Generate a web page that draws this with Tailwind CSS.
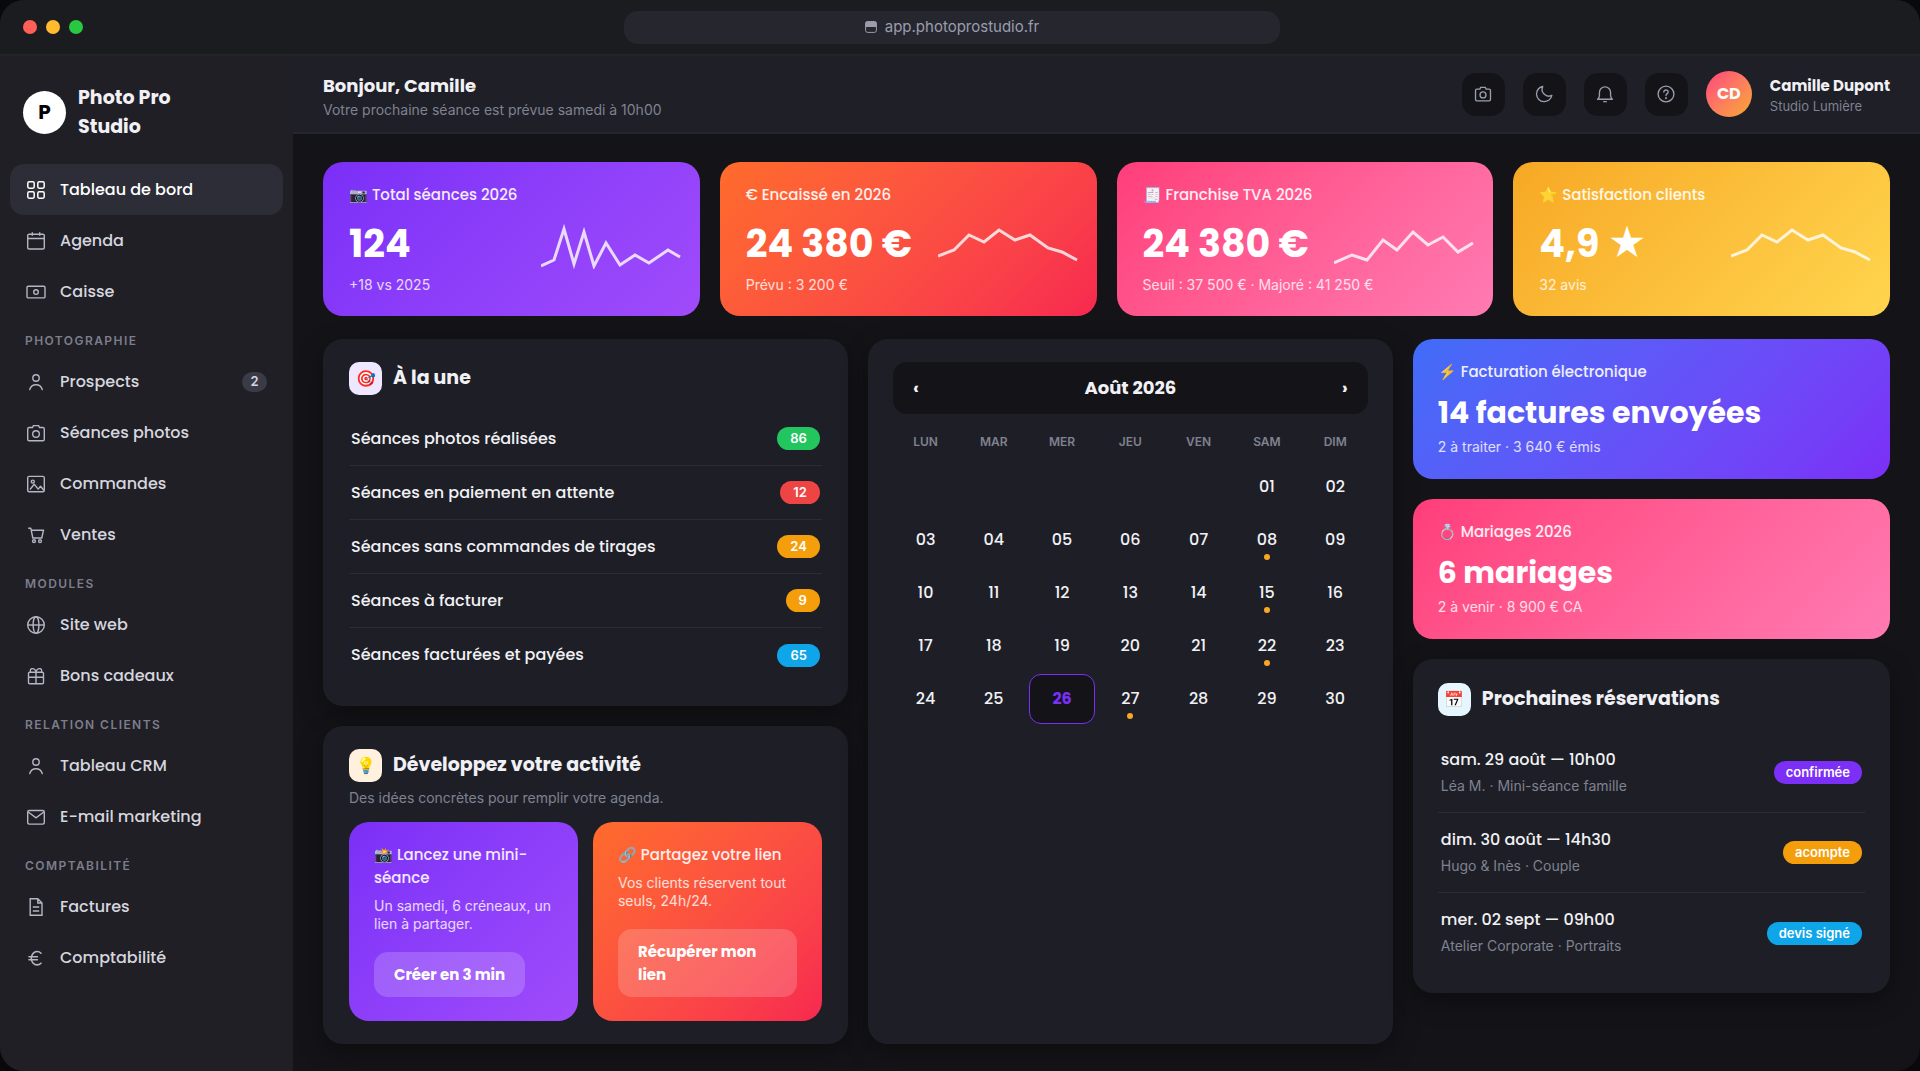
<!DOCTYPE html>
<html lang="fr">
<head>
  <meta charset="UTF-8" />
  <meta name="viewport" content="width=device-width, initial-scale=1.0" />
  <title>Photo Pro Studio - Tableau de bord</title>
  <script src="https://cdn.jsdelivr.net/npm/@tailwindcss/browser@4"></script>
</head>
<body class="bg-[#09090c] font-['Inter',sans-serif] text-[#f1f1f5]">
  <div class="min-h-screen flex flex-col rounded-3xl overflow-hidden bg-[#141418]">

    <!-- Window bar -->
    <div class="h-14 pl-[23px] pr-[39px] grid grid-cols-[1fr_656px_1fr] items-center bg-[#1b1c20] border-b-2 border-[#232428]">
      <div class="flex gap-[9px]">
        <span class="size-3.5 rounded-full bg-[#ff5f57]"></span>
        <span class="size-3.5 rounded-full bg-[#febc2e]"></span>
        <span class="size-3.5 rounded-full bg-[#28c840]"></span>
      </div>
      <div class="h-[33px] rounded-[14px] bg-[#26272e] flex items-center justify-center gap-2 text-[15px] text-[#9a9dae]">
        <svg class="size-3" viewBox="0 0 12 12" fill="none" stroke="currentColor"><rect x="0.6" y="0.6" width="10.8" height="10.8" rx="2"/><path d="M1 1h10v4.5H1z" fill="currentColor"/></svg>
        <span>app.photoprostudio.fr</span>
      </div>
    </div>

    <div class="flex-1 flex">
      <!-- Sidebar -->
      <aside class="w-[293px] shrink-0 bg-[#201f25] px-2.5 pt-6">
        <div class="flex items-center gap-3 px-[13px] pt-[3px] mb-[23px] font-['Poppins','Inter',sans-serif] font-bold">
          <span class="size-[43px] rounded-full bg-white text-black text-xl flex items-center justify-center">P</span>
          <span class="w-28 text-[19px] leading-[29px]">Photo Pro Studio</span>
        </div>

        <nav class="font-['Poppins','Inter',sans-serif] font-medium text-base text-[#d5d6df]">
          <a href="#" class="h-[51px] px-4 flex items-center gap-3.5 rounded-[14px] bg-[#2c2d36] text-white">
            <svg class="size-5" viewBox="0 0 20 20" fill="none" stroke="currentColor" stroke-width="1.5"><rect x="1.8" y="1.8" width="6.4" height="6.4" rx="1.4"/><rect x="11.8" y="1.8" width="6.4" height="6.4" rx="1.4"/><rect x="1.8" y="11.8" width="6.4" height="6.4" rx="1.4"/><rect x="11.8" y="11.8" width="6.4" height="6.4" rx="1.4"/></svg>
            Tableau de bord
          </a>
          <a href="#" class="h-[51px] px-4 flex items-center gap-3.5">
            <svg class="size-5 text-[#b4b6c4]" viewBox="0 0 20 20" fill="none" stroke="currentColor" stroke-width="1.4"><rect x="1.7" y="3.2" width="16.6" height="14.8" rx="1.5"/><path d="M1.7 7.5h16.6M6.3 1.2v3.6M13.7 1.2v3.6"/></svg>
            Agenda
          </a>
          <a href="#" class="h-[51px] px-4 flex items-center gap-3.5">
            <svg class="size-5 text-[#b4b6c4]" viewBox="0 0 20 20" fill="none" stroke="currentColor" stroke-width="1.4"><rect x="1" y="4.3" width="18" height="11.6" rx="1.2"/><circle cx="10" cy="10.1" r="2.3"/></svg>
            Caisse
          </a>

          <p class="h-[39px] px-[15px] pt-4 text-xs font-semibold tracking-[0.12em] text-[#7c7e8c] font-['Inter',sans-serif]">PHOTOGRAPHIE</p>
          <a href="#" class="h-[51px] px-4 flex items-center gap-3.5">
            <svg class="size-5 text-[#b4b6c4]" viewBox="0 0 20 20" fill="none" stroke="currentColor" stroke-width="1.4" stroke-linecap="round"><circle cx="10" cy="6" r="3.2"/><path d="M3.7 17.6c1-3.3 3.4-4.9 6.3-4.9s5.3 1.6 6.3 4.9"/></svg>
            <span class="flex-1">Prospects</span>
            <span class="h-5 min-w-[25px] rounded-full bg-[#3a3b47] text-[13px] font-semibold font-['Inter',sans-serif] flex items-center justify-center">2</span>
          </a>
          <a href="#" class="h-[51px] px-4 flex items-center gap-3.5">
            <svg class="size-5 text-[#b4b6c4]" viewBox="0 0 20 20" fill="none" stroke="currentColor" stroke-width="1.4"><path d="M3.2 4.5h3.3l.9-1.9h5.2l.9 1.9h3.3q1.5 0 1.5 1.5v10.2q0 1.5-1.5 1.5H3.2q-1.5 0-1.5-1.5V6q0-1.5 1.5-1.5z"/><circle cx="10" cy="11" r="3.3"/></svg>
            Séances photos
          </a>
          <a href="#" class="h-[51px] px-4 flex items-center gap-3.5">
            <svg class="size-5 text-[#b4b6c4]" viewBox="0 0 20 20" fill="none" stroke="currentColor" stroke-width="1.4" stroke-linejoin="round"><rect x="1.7" y="2.4" width="16.6" height="15.4" rx="1.5"/><circle cx="6.8" cy="7.6" r="1.5"/><path d="M4 15.5l4.2-5.2 4 4.8 2.3-2.8 3.3 4"/></svg>
            Commandes
          </a>
          <a href="#" class="h-[51px] px-4 flex items-center gap-3.5">
            <svg class="size-5 text-[#b4b6c4]" viewBox="0 0 20 20" fill="none" stroke="currentColor" stroke-width="1.4" stroke-linejoin="round"><path d="M2.2 3.2h2.6l2 9.8h9l1.7-7.8H5.2"/><circle cx="8" cy="16.2" r="1.4"/><circle cx="14" cy="16.2" r="1.4"/></svg>
            Ventes
          </a>

          <p class="h-[39px] px-[15px] pt-4 text-xs font-semibold tracking-[0.12em] text-[#7c7e8c] font-['Inter',sans-serif]">MODULES</p>
          <a href="#" class="h-[51px] px-4 flex items-center gap-3.5">
            <svg class="size-5 text-[#b4b6c4]" viewBox="0 0 20 20" fill="none" stroke="currentColor" stroke-width="1.4"><circle cx="10" cy="10" r="8.3"/><ellipse cx="10" cy="10" rx="2.9" ry="8.3"/><path d="M1.7 10h16.6"/></svg>
            Site web
          </a>
          <a href="#" class="h-[51px] px-4 flex items-center gap-3.5">
            <svg class="size-5 text-[#b4b6c4]" viewBox="0 0 20 20" fill="none" stroke="currentColor" stroke-width="1.4" stroke-linejoin="round"><rect x="2.5" y="6.2" width="15" height="11.6" rx="1.3"/><path d="M2.5 11.3h15M10 6.2v11.6M10 6.2C9.6 3.6 7.8 2.2 5.7 2.7 3.9 3.2 4 5.7 5 6.2M10 6.2c.4-2.6 2.2-4 4.3-3.5 1.8.5 1.7 3 .7 3.5"/></svg>
            Bons cadeaux
          </a>

          <p class="h-[39px] px-[15px] pt-4 text-xs font-semibold tracking-[0.12em] text-[#7c7e8c] font-['Inter',sans-serif]">RELATION CLIENTS</p>
          <a href="#" class="h-[51px] px-4 flex items-center gap-3.5">
            <svg class="size-5 text-[#b4b6c4]" viewBox="0 0 20 20" fill="none" stroke="currentColor" stroke-width="1.4" stroke-linecap="round"><circle cx="10" cy="6" r="3.2"/><path d="M3.7 17.6c1-3.3 3.4-4.9 6.3-4.9s5.3 1.6 6.3 4.9"/></svg>
            Tableau CRM
          </a>
          <a href="#" class="h-[51px] px-4 flex items-center gap-3.5">
            <svg class="size-5 text-[#b4b6c4]" viewBox="0 0 20 20" fill="none" stroke="currentColor" stroke-width="1.4"><rect x="1.7" y="3.5" width="16.6" height="13.6" rx="1.5"/><path d="M2.2 5l7.800 5.800L17.800 5"/></svg>
            E-mail marketing
          </a>

          <p class="h-[39px] px-[15px] pt-4 text-xs font-semibold tracking-[0.12em] text-[#7c7e8c] font-['Inter',sans-serif]">COMPTABILITÉ</p>
          <a href="#" class="h-[51px] px-4 flex items-center gap-3.5">
            <svg class="size-5 text-[#b4b6c4]" viewBox="0 0 20 20" fill="none" stroke="currentColor" stroke-width="1.4"><path d="M4.2 1.8h7.6l4.2 4.2v12.2H4.2zM11.8 1.8V6H16M6.8 10h6.4M6.8 14h6.4"/></svg>
            Factures
          </a>
          <a href="#" class="h-[51px] px-4 flex items-center gap-3.5">
            <svg class="size-5 text-[#b4b6c4]" viewBox="0 0 20 20" fill="none" stroke="currentColor" stroke-width="1.6" stroke-linecap="round"><path d="M15 5.2C13.8 4 12.6 3.5 11.2 3.5 7.8 3.5 5.3 6.5 5.3 10.2s2.5 6.7 5.9 6.7c1.4 0 2.6-.5 3.8-1.7M3 8.8h8.4M3 11.7h8.4"/></svg>
            Comptabilité
          </a>
        </nav>
      </aside>

      <div class="flex-1 min-w-0 flex flex-col">
        <!-- Header -->
        <header class="h-[78px] px-[30px] flex items-center gap-[18px] bg-[#1e1f27] border-b-2 border-[#26272c]">
          <div class="flex-1 pt-2">
            <h1 class="font-['Poppins','Inter',sans-serif] font-bold text-lg leading-6">Bonjour, Camille</h1>
            <p class="text-sm leading-6 text-[#7f8290]">Votre prochaine séance est prévue samedi à 10h00</p>
          </div>
          <button aria-label="Photos" class="size-[43px] rounded-[14px] bg-[#141418] text-[#9a9dae] flex items-center justify-center">
            <svg class="size-[18px]" viewBox="0 0 20 20" fill="none" stroke="currentColor" stroke-width="1.5"><path d="M3.2 4.5h3.3l.9-1.9h5.2l.9 1.9h3.3q1.5 0 1.5 1.5v10.2q0 1.5-1.5 1.5H3.2q-1.5 0-1.5-1.5V6q0-1.5 1.5-1.5z"/><circle cx="10" cy="11" r="3.3"/></svg>
          </button>
          <button aria-label="Mode sombre" class="size-[43px] rounded-[14px] bg-[#141418] text-[#9a9dae] flex items-center justify-center">
            <svg class="size-[18px]" viewBox="0 0 20 20" fill="none" stroke="currentColor" stroke-width="1.5" stroke-linejoin="round"><path d="M8.6 1.5A8.6 8.6 0 1 0 18.7 11.6 7.6 7.6 0 0 1 8.6 1.5z"/></svg>
          </button>
          <button aria-label="Notifications" class="size-[43px] rounded-[14px] bg-[#141418] text-[#9a9dae] flex items-center justify-center">
            <svg class="size-[18px]" viewBox="0 0 20 20" fill="none" stroke="currentColor" stroke-width="1.5" stroke-linejoin="round"><path d="M1.8 15.8h16.4q-2-1.6-2-4.2V8.2a6.2 6.2 0 0 0-12.4 0v3.4q0 2.6-2 4.2zM8 18.4h4"/></svg>
          </button>
          <button aria-label="Aide" class="size-[43px] rounded-[14px] bg-[#141418] text-[#9a9dae] flex items-center justify-center">
            <svg class="size-[18px]" viewBox="0 0 20 20" fill="none" stroke="currentColor" stroke-width="1.5" stroke-linecap="round"><circle cx="10" cy="10" r="8.8"/><path d="M7.6 7.8c.2-3 4.8-3 4.8-.1 0 1.9-2.4 1.9-2.4 4"/><circle cx="10" cy="14.6" r=".4" fill="currentColor"/></svg>
          </button>
          <span class="size-[46px] rounded-full bg-linear-135 from-[#ff3d7a] to-[#f7a824] font-['Poppins','Inter',sans-serif] font-bold text-white flex items-center justify-center">CD</span>
          <div class="pt-1">
            <p class="font-['Poppins','Inter',sans-serif] font-bold text-[15px] leading-5">Camille Dupont</p>
            <p class="text-[13px] leading-5 text-[#7f8290]">Studio Lumière</p>
          </div>
        </header>

        <main class="flex-1 px-[30px] pt-7 pb-[27px]">
          <!-- Key figures -->
          <section class="grid grid-cols-4 gap-5 mb-[23px] text-white">
            <article class="h-[154px] pl-[26px] pr-[19px] pt-[21px] rounded-[20px] bg-linear-135 from-[#7b2ff7] to-[#a04bfb]">
              <h2 class="font-['Poppins','Inter',sans-serif] font-medium text-[15px] leading-[23px] text-white/90">📷 Total séances 2026</h2>
              <div class="h-[69px] pt-1.5 flex items-center justify-between">
                <p class="font-['Poppins','Inter',sans-serif] font-bold text-[38px] leading-none whitespace-nowrap">124</p>
                <svg class="w-[140px] h-[50px]" viewBox="0 0 140 50" fill="none" stroke="white" stroke-opacity=".8" stroke-width="3"><polyline points="0,47 13,41 23,10 33,45 43,13 53,47 65,24 79,46 94,36 108,44 127,31 139,38"/></svg>
              </div>
              <p class="text-sm leading-5 text-white/80">+18 vs 2025</p>
            </article>
            <article class="h-[154px] pl-[26px] pr-[19px] pt-[21px] rounded-[20px] bg-linear-135 from-[#ff6b2b] to-[#f7284f]">
              <h2 class="font-['Poppins','Inter',sans-serif] font-medium text-[15px] leading-[23px] text-white/90">€ Encaissé en 2026</h2>
              <div class="h-[69px] pt-1.5 flex items-center justify-between">
                <p class="font-['Poppins','Inter',sans-serif] font-bold text-[38px] leading-none whitespace-nowrap">24 380 €</p>
                <svg class="w-[140px] h-[50px]" viewBox="0 0 140 50" fill="none" stroke="white" stroke-opacity=".8" stroke-width="3"><polyline points="0,37 16,31 31,16 46,23 61,11 77,21 92,16 110,29 124,33 139,41"/></svg>
              </div>
              <p class="text-sm leading-5 text-white/80">Prévu : 3 200 €</p>
            </article>
            <article class="h-[154px] pl-[26px] pr-[19px] pt-[21px] rounded-[20px] bg-linear-135 from-[#ff3d7a] to-[#ff7ab2]">
              <h2 class="font-['Poppins','Inter',sans-serif] font-medium text-[15px] leading-[23px] text-white/90">🧾 Franchise TVA 2026</h2>
              <div class="h-[69px] pt-1.5 flex items-center justify-between">
                <p class="font-['Poppins','Inter',sans-serif] font-bold text-[38px] leading-none whitespace-nowrap">24 380 €</p>
                <svg class="w-[140px] h-[50px]" viewBox="0 0 140 50" fill="none" stroke="white" stroke-opacity=".8" stroke-width="3"><polyline points="0,44 18,36 33,41 49,21 63,31 79,13 94,26 109,18 124,33 139,24"/></svg>
              </div>
              <p class="text-sm leading-5 text-white/80">Seuil : 37 500 € · Majoré : 41 250 €</p>
            </article>
            <article class="h-[154px] pl-[26px] pr-[19px] pt-[21px] rounded-[20px] bg-linear-135 from-[#f7a824] to-[#ffd54d]">
              <h2 class="font-['Poppins','Inter',sans-serif] font-medium text-[15px] leading-[23px] text-white/90">⭐ Satisfaction clients</h2>
              <div class="h-[69px] pt-1.5 flex items-center justify-between">
                <p class="font-['Poppins','Inter',sans-serif] font-bold text-[38px] leading-none whitespace-nowrap">4,9 ★</p>
                <svg class="w-[140px] h-[50px]" viewBox="0 0 140 50" fill="none" stroke="white" stroke-opacity=".8" stroke-width="3"><polyline points="0,37 16,31 31,16 46,23 61,11 77,21 92,16 110,29 124,33 139,41"/></svg>
              </div>
              <p class="text-sm leading-5 text-white/80">32 avis</p>
            </article>
          </section>

          <div class="grid grid-cols-[11fr_11fr_10fr] gap-5">
            <div class="flex flex-col gap-5">
              <section class="h-[367px] px-[26px] pt-[23px] rounded-[20px] bg-[#1e1f26] shadow-[0_8px_24px_rgba(0,0,0,0.35)]">
                <h2 class="flex items-center gap-[11px] mb-[17px] font-['Poppins','Inter',sans-serif] font-bold text-[19px]">
                  <span class="size-[33px] rounded-[10px] bg-[#efe6ff] text-base flex items-center justify-center">🎯</span>
                  À la une
                </h2>
                <ul class="divide-y divide-[#2b2c35] font-['Poppins','Inter',sans-serif] font-medium text-base">
                  <li class="h-[54px] px-0.5 flex items-center justify-between">Séances photos réalisées <span class="h-[23px] px-[13px] rounded-full bg-[#22c55e] text-white text-[13px] leading-[23px] font-semibold font-['Inter',sans-serif]">86</span></li>
                  <li class="h-[54px] px-0.5 flex items-center justify-between">Séances en paiement en attente <span class="h-[23px] px-[13px] rounded-full bg-[#ef4444] text-white text-[13px] leading-[23px] font-semibold font-['Inter',sans-serif]">12</span></li>
                  <li class="h-[54px] px-0.5 flex items-center justify-between">Séances sans commandes de tirages <span class="h-[23px] px-[13px] rounded-full bg-[#f59e0b] text-white text-[13px] leading-[23px] font-semibold font-['Inter',sans-serif]">24</span></li>
                  <li class="h-[54px] px-0.5 flex items-center justify-between">Séances à facturer <span class="h-[23px] px-[13px] rounded-full bg-[#f59e0b] text-white text-[13px] leading-[23px] font-semibold font-['Inter',sans-serif]">9</span></li>
                  <li class="h-[54px] px-0.5 flex items-center justify-between">Séances facturées et payées <span class="h-[23px] px-[13px] rounded-full bg-[#0ea5e9] text-white text-[13px] leading-[23px] font-semibold font-['Inter',sans-serif]">65</span></li>
                </ul>
              </section>

              <section class="h-[318px] px-[26px] pt-[23px] rounded-[20px] bg-[#1e1f26] shadow-[0_8px_24px_rgba(0,0,0,0.35)]">
                <h2 class="flex items-center gap-[11px] font-['Poppins','Inter',sans-serif] font-bold text-[19px]">
                  <span class="size-[33px] rounded-[10px] bg-[#fff1de] text-base flex items-center justify-center">💡</span>
                  Développez votre activité
                </h2>
                <p class="mt-1.5 mb-[14px] text-sm leading-5 text-[#7f8290]">Des idées concrètes pour remplir votre agenda.</p>
                <div class="grid grid-cols-2 gap-[15px] text-white">
                  <article class="h-[199px] px-[25px] pt-[21px] rounded-[20px] bg-linear-135 from-[#7b2ff7] to-[#a04bfb]">
                    <h3 class="font-['Poppins','Inter',sans-serif] font-medium text-[15px] leading-[23px] text-white/90">📸 Lancez une mini-séance</h3>
                    <p class="mt-2 mb-[19px] text-sm leading-[18px] text-white/80">Un samedi, 6 créneaux, un lien à partager.</p>
                    <button class="px-5 py-[11px] rounded-[14px] bg-white/18 text-left font-['Poppins','Inter',sans-serif] font-bold text-[15px] leading-[23px]">Créer en 3 min</button>
                  </article>
                  <article class="h-[199px] px-[25px] pt-[21px] rounded-[20px] bg-linear-135 from-[#ff6b2b] to-[#f7284f]">
                    <h3 class="font-['Poppins','Inter',sans-serif] font-medium text-[15px] leading-[23px] text-white/90">🔗 Partagez votre lien</h3>
                    <p class="mt-2 mb-[19px] text-sm leading-[18px] text-white/80">Vos clients réservent tout seuls, 24h/24.</p>
                    <button class="px-5 py-[11px] rounded-[14px] bg-white/18 text-left font-['Poppins','Inter',sans-serif] font-bold text-[15px] leading-[23px]">Récupérer mon lien</button>
                  </article>
                </div>
              </section>
            </div>

            <!-- Calendar -->
            <section class="px-[25px] pt-[23px] rounded-[20px] bg-[#1e1f26] shadow-[0_8px_24px_rgba(0,0,0,0.35)]">
              <div class="h-[52px] px-5 flex items-center justify-between rounded-[14px] bg-[#141418] font-['Poppins','Inter',sans-serif] font-bold text-lg">
                <button aria-label="Mois précédent">‹</button>
                <h2>Août 2026</h2>
                <button aria-label="Mois suivant">›</button>
              </div>
              <div class="mt-[18px] mb-2.5 grid grid-cols-7 gap-[3px] text-center text-xs leading-5 font-semibold text-[#7f8290]">
                <span>LUN</span><span>MAR</span><span>MER</span><span>JEU</span><span>VEN</span><span>SAM</span><span>DIM</span>
              </div>
              <div class="grid grid-cols-7 auto-rows-[50px] gap-[3px] font-['Poppins','Inter',sans-serif] font-medium text-base">
                <button class="col-start-6">01</button>
                <button>02</button>
                <button>03</button>
                <button>04</button>
                <button>05</button>
                <button>06</button>
                <button>07</button>
                <button class="relative">08<span class="absolute bottom-[5px] left-1/2 -translate-x-1/2 size-1.5 rounded-full bg-[#f9a826]"></span></button>
                <button>09</button>
                <button>10</button>
                <button>11</button>
                <button>12</button>
                <button>13</button>
                <button>14</button>
                <button class="relative">15<span class="absolute bottom-[5px] left-1/2 -translate-x-1/2 size-1.5 rounded-full bg-[#f9a826]"></span></button>
                <button>16</button>
                <button>17</button>
                <button>18</button>
                <button>19</button>
                <button>20</button>
                <button>21</button>
                <button class="relative">22<span class="absolute bottom-[5px] left-1/2 -translate-x-1/2 size-1.5 rounded-full bg-[#f9a826]"></span></button>
                <button>23</button>
                <button>24</button>
                <button>25</button>
                <button class="rounded-xl border border-[#7b2ff7] bg-[#141418] font-bold text-[#7b2ff7]">26</button>
                <button class="relative">27<span class="absolute bottom-[5px] left-1/2 -translate-x-1/2 size-1.5 rounded-full bg-[#f9a826]"></span></button>
                <button>28</button>
                <button>29</button>
                <button>30</button>
              </div>
            </section>

            <div class="flex flex-col gap-5">
              <article class="h-[140px] px-[25px] pt-[21px] rounded-[20px] bg-linear-135 from-[#3f6cf8] to-[#7b2ff7] text-white">
                <h2 class="font-['Poppins','Inter',sans-serif] font-medium text-[15px] leading-[23px] text-white/90">⚡ Facturation électronique</h2>
                <p class="pt-1.5 font-['Poppins','Inter',sans-serif] font-bold text-[30px] leading-12 whitespace-nowrap">14 factures envoyées</p>
                <p class="text-sm leading-5 text-white/80">2 à traiter · 3 640 € émis</p>
              </article>
              <article class="h-[140px] px-[25px] pt-[21px] rounded-[20px] bg-linear-135 from-[#ff3d7a] to-[#ff7ab2] text-white">
                <h2 class="font-['Poppins','Inter',sans-serif] font-medium text-[15px] leading-[23px] text-white/90">💍 Mariages 2026</h2>
                <p class="pt-1.5 font-['Poppins','Inter',sans-serif] font-bold text-[30px] leading-12 whitespace-nowrap">6 mariages</p>
                <p class="text-sm leading-5 text-white/80">2 à venir · 8 900 € CA</p>
              </article>

              <section class="h-[334px] px-[25px] pt-6 rounded-[20px] bg-[#1e1f26] shadow-[0_8px_24px_rgba(0,0,0,0.35)]">
                <h2 class="flex items-center gap-[11px] mb-[17px] font-['Poppins','Inter',sans-serif] font-bold text-[19px]">
                  <span class="size-[33px] rounded-[10px] bg-[#e6f6ff] text-base flex items-center justify-center">📅</span>
                  Prochaines réservations
                </h2>
                <ul class="divide-y divide-[#2b2c35]">
                  <li class="h-20 px-[3px] flex items-center justify-between">
                    <div>
                      <p class="font-['Poppins','Inter',sans-serif] font-medium text-base leading-[26px]">sam. 29 août — 10h00</p>
                      <p class="text-sm leading-[26px] text-[#7f8290]">Léa M. · Mini-séance famille</p>
                    </div>
                    <span class="h-[23px] px-3 rounded-full bg-[#7b2ff7] text-white text-[13px] leading-[23px] font-semibold">confirmée</span>
                  </li>
                  <li class="h-20 px-[3px] flex items-center justify-between">
                    <div>
                      <p class="font-['Poppins','Inter',sans-serif] font-medium text-base leading-[26px]">dim. 30 août — 14h30</p>
                      <p class="text-sm leading-[26px] text-[#7f8290]">Hugo &amp; Inès · Couple</p>
                    </div>
                    <span class="h-[23px] px-3 rounded-full bg-[#f59e0b] text-white text-[13px] leading-[23px] font-semibold">acompte</span>
                  </li>
                  <li class="h-20 px-[3px] flex items-center justify-between">
                    <div>
                      <p class="font-['Poppins','Inter',sans-serif] font-medium text-base leading-[26px]">mer. 02 sept — 09h00</p>
                      <p class="text-sm leading-[26px] text-[#7f8290]">Atelier Corporate · Portraits</p>
                    </div>
                    <span class="h-[23px] px-3 rounded-full bg-[#0ea5e9] text-white text-[13px] leading-[23px] font-semibold">devis signé</span>
                  </li>
                </ul>
              </section>
            </div>
          </div>
        </main>
      </div>
    </div>
  </div>
</body>
</html>
